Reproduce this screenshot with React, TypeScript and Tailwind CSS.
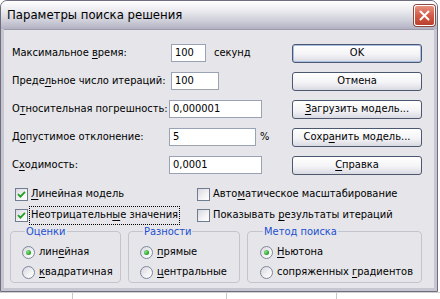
import type { ReactNode } from 'react';

// Диалог «Параметры поиска решения» в стиле XP Silver
const ui = "font-['DejaVu_Sans_Condensed','DejaVu_Sans',sans-serif] text-[11px] text-black";

function U({ children }: { children: ReactNode }) {
  return <span className="underline underline-offset-[2px]">{children}</span>;
}

function Field({ className, value }: { className: string; value: string }) {
  return (
    <div className={`flex h-[18px] items-center border border-[#9aa3b3] bg-white pl-[3px] ${className}`}>
      {value}
    </div>
  );
}

function Btn({ children, primary }: { children: ReactNode; primary?: boolean }) {
  return (
    <div
      className={`ml-auto flex h-[19px] w-[130px] items-center justify-center rounded-[3px] border border-[#4c5870] bg-[linear-gradient(to_bottom,#ffffff_0%,#f4f4f7_55%,#d9d9e2_100%)] ${
        primary ? 'shadow-[inset_0_0_0_1px_#a9bfe6]' : ''
      }`}
    >
      {children}
    </div>
  );
}

function Check({ checked, children, focus }: { checked?: boolean; children: ReactNode; focus?: boolean }) {
  return (
    <div className="flex items-center">
      <div className="flex h-[13px] w-[13px] items-center justify-center border border-[#6f7c92] bg-[linear-gradient(135deg,#d8d8e0_0%,#f4f4f6_60%,#ffffff_100%)]">
        {checked && (
          <svg width="9" height="9" viewBox="0 0 9 9">
            <path d="M1 4.2 L3.4 6.6 L8 1.8" fill="none" stroke="#21a121" strokeWidth="1.9" />
          </svg>
        )}
      </div>
      <span className={`ml-[2px] px-[1px] ${focus ? 'outline-1 outline-dotted outline-black' : ''}`}>{children}</span>
    </div>
  );
}

function Radio({ checked, children }: { checked?: boolean; children: ReactNode }) {
  return (
    <div className="flex h-[20px] items-center">
      <div className="flex h-[13px] w-[13px] items-center justify-center rounded-full border border-[#7d879a] bg-[linear-gradient(135deg,#d6d6de_0%,#f3f3f5_60%,#ffffff_100%)]">
        {checked && <div className="h-[5px] w-[5px] rounded-full bg-[radial-gradient(circle_at_35%_35%,#8ee08e_0%,#21a121_70%)]" />}
      </div>
      <span className="ml-[4px]">{children}</span>
    </div>
  );
}

function Group({ title, className, children }: { title: string; className: string; children: ReactNode }) {
  return (
    <fieldset className={`h-[57px] rounded-[4px] border border-[#c4c4cc] ${className}`}>
      <legend className="ml-[3px] px-[1px] leading-[11px] text-[#1c4fd0]">{title}</legend>
      <div className="flex flex-col pt-[5px]">{children}</div>
    </fieldset>
  );
}

export default function App() {
  return (
    <div className={`flex h-[299px] w-[440px] flex-col overflow-hidden bg-white ${ui}`}>
      <div className="flex h-[292px] w-[438px] flex-col overflow-hidden rounded-t-[7px] border border-[#6e6e80] bg-[#c6c6d0]">
        {/* заголовок */}
        <div className="flex h-[28px] shrink-0 items-center justify-between bg-[linear-gradient(to_bottom,#ffffff_0%,#eeeef2_30%,#cfcfda_70%,#b1b1c2_100%)] pl-[6px] pr-[2px]">
          <span className="text-[13px]">Параметры поиска решения</span>
          <div className="flex h-[21px] w-[21px] items-center justify-center rounded-[3px] border border-white bg-[linear-gradient(to_bottom,#e89080_0%,#d35c48_50%,#b8402c_100%)] shadow-[0_0_0_1px_#8a4a40]">
            <svg width="11" height="11" viewBox="0 0 11 11">
              <path d="M1.5 1.5 L9.5 9.5 M9.5 1.5 L1.5 9.5" stroke="white" strokeWidth="2" strokeLinecap="round" />
            </svg>
          </div>
        </div>

        {/* содержимое */}
        <div className="mx-[3px] mb-[3px] flex flex-1 flex-col border-t border-[#9c9cac] bg-[#e6e6ea] pl-[8px] pr-[12px] pt-[9px]">
          <div className="flex h-[28px] items-center">
            <span className="w-[159px]">Максимальное <U>в</U>ремя:</span>
            <Field className="w-[35px]" value="100" />
            <span className="ml-[8px]">секунд</span>
            <Btn primary>OK</Btn>
          </div>
          <div className="flex h-[28px] items-center">
            <span className="w-[159px]">Преде<U>л</U>ьное число итераций:</span>
            <Field className="w-[48px]" value="100" />
            <Btn>Отмена</Btn>
          </div>
          <div className="flex h-[28px] items-center">
            <span className="w-[157px]">О<U>т</U>носительная погрешность:</span>
            <Field className="w-[93px]" value="0,000001" />
            <Btn>
              <span><U>З</U>агрузить модель...</span>
            </Btn>
          </div>
          <div className="flex h-[28px] items-center">
            <span className="w-[157px]">Д<U>о</U>пустимое отклонение:</span>
            <Field className="w-[87px]" value="5" />
            <span className="ml-[4px]">%</span>
            <Btn>
              <span>Сохр<U>а</U>нить модель...</span>
            </Btn>
          </div>
          <div className="flex h-[28px] items-center">
            <span className="w-[157px]">С<U>х</U>одимость:</span>
            <Field className="w-[93px]" value="0,0001" />
            <Btn>
              <span><U>С</U>правка</span>
            </Btn>
          </div>

          <div className="mt-[5px] flex h-[21px] items-center pl-[3px]">
            <div className="w-[182px]">
              <Check checked><U>Л</U>инейная модель</Check>
            </div>
            <Check>Авто<U>м</U>атическое масштабирование</Check>
          </div>
          <div className="flex h-[21px] items-center pl-[3px]">
            <div className="w-[182px]">
              <Check checked focus>Неотрицательн<U>ы</U>е значения</Check>
            </div>
            <Check>Показывать <U>р</U>езультаты итераций</Check>
          </div>

          <div className="-ml-[2px] flex gap-[7px]">
            <Group title="Оценки" className="w-[111px] pl-[11px]">
              <Radio checked>лин<U>е</U>йная</Radio>
              <Radio><U>к</U>вадратичная</Radio>
            </Group>
            <Group title="Разности" className="w-[112px] pl-[11px]">
              <Radio checked><U>п</U>рямые</Radio>
              <Radio><U>ц</U>ентральные</Radio>
            </Group>
            <Group title="Метод поиска" className="w-[175px] pl-[12px]">
              <Radio checked><U>Н</U>ьютона</Radio>
              <Radio>сопряженных <U>г</U>радиентов</Radio>
            </Group>
          </div>
        </div>
      </div>
      {/* полоса листа под окном */}
      <div className="flex flex-1 border-t border-[#d0d0d0]">
        <div className="w-[73px] border-r border-[#c8c8c8]" />
        <div className="w-[154px] border-r border-[#c8c8c8]" />
        <div className="w-[110px] border-r border-[#c8c8c8]" />
      </div>
    </div>
  );
}
